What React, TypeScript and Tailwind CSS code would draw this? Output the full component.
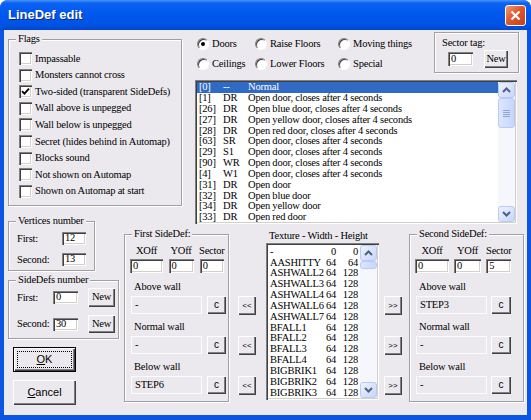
import React from "react";

const SUNKEN =
  "bg-white shadow-[inset_1px_1px_0_#808080,inset_2px_2px_0_#404040,inset_-1px_-1px_0_#ffffff,inset_-2px_-2px_0_#d4d0c8]";
const RAISED =
  "bg-[#ebe9ed] shadow-[inset_1px_1px_0_#ffffff,inset_-1px_-1px_0_#404040,inset_-2px_-2px_0_#808080]";

function Group({
  label,
  className = "",
  children,
}: {
  label?: string;
  className?: string;
  children?: React.ReactNode;
}) {
  return (
    <div
      className={`relative shrink-0 border border-[#a0a0a0] shadow-[inset_1px_1px_0_#ffffff,1px_1px_0_#ffffff] ${className}`}
    >
      {label && (
        <span className="absolute -top-[8px] left-[7px] whitespace-nowrap bg-[#ebe9ed] px-[2px] leading-[14px]">
          {label}
        </span>
      )}
      {children}
    </div>
  );
}

function Check({ checked }: { checked?: boolean }) {
  return (
    <span
      className={`flex h-[13px] w-[13px] shrink-0 items-center justify-center ${SUNKEN}`}
    >
      {checked && (
        <svg width="9" height="9" viewBox="0 0 9 9">
          <path d="M1 4.2 L3.4 6.6 L8 1.6" stroke="#000" strokeWidth="1.8" fill="none" />
        </svg>
      )}
    </span>
  );
}

function Radio({ on }: { on?: boolean }) {
  return (
    <span className="flex h-[12px] w-[12px] shrink-0 items-center justify-center rounded-full border border-t-[#808080] border-l-[#808080] border-r-white border-b-white bg-white shadow-[inset_1px_1px_0_#404040]">
      {on && <span className="h-[4px] w-[4px] rounded-full bg-black" />}
    </span>
  );
}

function Edit({ value, className = "" }: { value: string; className?: string }) {
  return (
    <div className={`flex shrink-0 items-center pl-[3px] leading-none ${SUNKEN} ${className}`}>
      {value}
    </div>
  );
}

function Btn({ children, className = "" }: { children: React.ReactNode; className?: string }) {
  return (
    <div className={`flex shrink-0 items-center justify-center leading-none ${RAISED} ${className}`}>
      {children}
    </div>
  );
}

function SbBtn({ dir }: { dir: "up" | "down" }) {
  return (
    <div className="flex h-[16px] w-[17px] shrink-0 items-center justify-center rounded-[3px] border border-[#b9caf6] bg-[linear-gradient(135deg,#eef3ff,#c5d5fb)]">
      <svg width="9" height="6" viewBox="0 0 9 6">
        <path
          d={dir === "up" ? "M1 5 L4.5 1.5 L8 5" : "M1 1 L4.5 4.5 L8 1"}
          stroke="#4d6185"
          strokeWidth="2"
          fill="none"
        />
      </svg>
    </div>
  );
}

function Scrollbar({ thumb }: { thumb: number }) {
  return (
    <div className="flex w-[17px] shrink-0 flex-col bg-[#f5f7fd]">
      <SbBtn dir="up" />
      <div
        className="flex w-[17px] shrink-0 items-center justify-center rounded-[3px] border border-[#b9caf6] bg-[linear-gradient(90deg,#dce6ff,#c6d6fc)]"
        style={{ height: thumb }}
      >
        {thumb > 14 && (
          <svg width="7" height="8" viewBox="0 0 7 8">
            <path d="M0 1.5H7M0 3.5H7M0 5.5H7M0 7.5H7" stroke="#8ea5d9" strokeWidth="1" />
          </svg>
        )}
      </div>
      <div className="flex-1" />
      <SbBtn dir="down" />
    </div>
  );
}

const flags: [string, boolean][] = [
  ["Impassable", false],
  ["Monsters cannot cross", false],
  ["Two-sided (transparent SideDefs)", true],
  ["Wall above is unpegged", false],
  ["Wall below is unpegged", false],
  ["Secret (hides behind in Automap)", false],
  ["Blocks sound", false],
  ["Not shown on Automap", false],
  ["Shown on Automap at start", false],
];

const specials: [string, string, string][] = [
  ["[0]", "--", "Normal"],
  ["[1]", "DR", "Open door, closes after 4 seconds"],
  ["[26]", "DR", "Open blue door, closes after 4 seconds"],
  ["[27]", "DR", "Open yellow door, closes after 4 seconds"],
  ["[28]", "DR", "Open red door, closes after 4 seconds"],
  ["[63]", "SR", "Open door, closes after 4 seconds"],
  ["[29]", "S1", "Open door, closes after 4 seconds"],
  ["[90]", "WR", "Open door, closes after 4 seconds"],
  ["[4]", "W1", "Open door, closes after 4 seconds"],
  ["[31]", "DR", "Open door"],
  ["[32]", "DR", "Open blue door"],
  ["[34]", "DR", "Open yellow door"],
  ["[33]", "DR", "Open red door"],
];

const textures: [string, string, string][] = [
  ["-", "0", "0"],
  ["AASHITTY", "64", "64"],
  ["ASHWALL2", "64", "128"],
  ["ASHWALL3", "64", "128"],
  ["ASHWALL4", "64", "128"],
  ["ASHWALL6", "64", "128"],
  ["ASHWALL7", "64", "128"],
  ["BFALL1", "64", "128"],
  ["BFALL2", "64", "128"],
  ["BFALL3", "64", "128"],
  ["BFALL4", "64", "128"],
  ["BIGBRIK1", "64", "128"],
  ["BIGBRIK2", "64", "128"],
  ["BIGBRIK3", "64", "128"],
];

function WallBlock({
  label,
  value,
  fieldW,
  btnW,
  gap,
}: {
  label: string;
  value: string;
  fieldW: string;
  btnW: string;
  gap: string;
}) {
  return (
    <div className="flex flex-col">
      <div className="ml-[9px] h-[12px] leading-[12px]">{label}</div>
      <div className={`ml-[6px] mt-[3px] flex ${gap}`}>
        <div className={`flex h-[18px] items-center border border-[#fcfcfc] pl-[3px] ${fieldW}`}>
          {value}
        </div>
        <Btn className={`h-[18px] font-['Liberation_Sans',sans-serif] text-[10px] ${btnW}`}>c</Btn>
      </div>
    </div>
  );
}

function SideDef({
  label,
  offs,
  inW,
  inGap,
  walls,
  fieldW,
  btnW,
  fGap,
}: {
  label: string;
  offs: [string, string, string];
  inW: [string, string, string];
  inGap: string;
  walls: [string, string, string];
  fieldW: string;
  btnW: string;
  fGap: string;
}) {
  const heads = ["XOff", "YOff", "Sector"];
  return (
    <Group label={label} className="mt-[13px] h-[168px]">
      <div className={`ml-[5px] mt-[10px] flex ${inGap}`}>
        {heads.map((h, i) => (
          <div key={h} className="flex flex-col items-center">
            <div className="h-[12px] whitespace-nowrap leading-[12px]">{h}</div>
            <Edit value={offs[i]} className={`mt-[2px] h-[14px] ${inW[i]}`} />
          </div>
        ))}
      </div>
      <div className="mt-[8px] flex flex-col gap-[7px]">
        <WallBlock label="Above wall" value={walls[0]} fieldW={fieldW} btnW={btnW} gap={fGap} />
        <WallBlock label="Normal wall" value={walls[1]} fieldW={fieldW} btnW={btnW} gap={fGap} />
        <WallBlock label="Below wall" value={walls[2]} fieldW={fieldW} btnW={btnW} gap={fGap} />
      </div>
    </Group>
  );
}

function ArrowCol({ text }: { text: string }) {
  return (
    <div className="mt-[75px] flex flex-col gap-[21px]">
      {[0, 1, 2].map((i) => (
        <Btn key={i} className="h-[19px] w-[18px] font-['Liberation_Sans',sans-serif] text-[8px] tracking-normal">
          {text}
        </Btn>
      ))}
    </div>
  );
}

export default function App() {
  return (
    <div className="h-[420px] w-[531px] bg-white font-['Liberation_Serif',serif] text-[10.5px] tracking-[-0.2px] text-black">
      <div className="flex h-full flex-col rounded-t-[8px] bg-[#0b55e3]">
        {/* Title bar */}
        <div className="flex h-[30px] shrink-0 items-center rounded-t-[8px] bg-[linear-gradient(180deg,#4a96fa_0%,#0b62f2_10%,#0058ee_45%,#0053e2_85%,#0046cd_100%)] pl-[8px] pr-[5px]">
          <span className="font-['Liberation_Sans',sans-serif] text-[13px] font-bold tracking-normal text-white [text-shadow:1px_1px_0_#0a2a8a]">
            LineDef edit
          </span>
          <div className="ml-auto flex h-[21px] w-[21px] items-center justify-center rounded-[3px] border border-white bg-[linear-gradient(135deg,#f09a7a,#e0582e_45%,#c2401c)]">
            <svg width="11" height="11" viewBox="0 0 11 11">
              <path d="M1.5 1.5 L9.5 9.5 M9.5 1.5 L1.5 9.5" stroke="#fff" strokeWidth="2.2" />
            </svg>
          </div>
        </div>

        {/* Client area */}
        <div className="mx-[4px] mb-[5px] flex flex-1 flex-col bg-[#ebe9ed]">
          {/* Top section */}
          <div className="flex h-[191px] shrink-0 items-start">
            <Group label="Flags" className="ml-[4px] mt-[9px] h-[167px] w-[174px]">
              <div className="flex flex-col gap-[3.6px] pl-[10px] pt-[12px]">
                {flags.map(([t, c]) => (
                  <div key={t} className="flex h-[13px] items-center gap-[3px] whitespace-nowrap">
                    <Check checked={c} />
                    <span>{t}</span>
                  </div>
                ))}
              </div>
            </Group>

            <div className="ml-[13px] flex w-[329px] flex-col">
              <div className="flex h-[43px] items-start">
                <div className="ml-[2px] mt-[8px] grid w-[237px] grid-cols-[58px_83px_1fr] gap-y-[8px]">
                  {[
                    ["Doors", true],
                    ["Raise Floors", false],
                    ["Moving things", false],
                    ["Ceilings", false],
                    ["Lower Floors", false],
                    ["Special", false],
                  ].map(([t, on]) => (
                    <div key={t as string} className="flex h-[12px] items-center gap-[3px] whitespace-nowrap">
                      <Radio on={on as boolean} />
                      <span>{t as string}</span>
                    </div>
                  ))}
                </div>
                <div className="mt-[2px] flex h-[41px] w-[85px] flex-col border border-[#a0a0a0] shadow-[inset_1px_1px_0_#ffffff,1px_1px_0_#ffffff]">
                  <div className="ml-[7px] mt-[3px] h-[14px] leading-[14px]">Sector tag:</div>
                  <div className="ml-[13px] flex items-center gap-[11px]">
                    <Edit value="0" className="h-[14px] w-[25px]" />
                    <Btn className="h-[18px] w-[24px]">New</Btn>
                  </div>
                </div>
              </div>

              <div className={`mt-[7px] flex h-[144px] w-[322px] p-[2px] ${SUNKEN}`}>
                <div className="flex flex-1 flex-col overflow-hidden">
                  {specials.map(([n, k, d], i) => (
                    <div
                      key={n}
                      className={`flex h-[10.85px] shrink-0 items-center whitespace-nowrap leading-none ${
                        i === 0 ? "bg-[#316ac5] text-white" : ""
                      }`}
                    >
                      <span className="w-[26px] pl-[2px]">{n}</span>
                      <span className="w-[25px]">{k}</span>
                      <span>{d}</span>
                    </div>
                  ))}
                </div>
                <Scrollbar thumb={30} />
              </div>
            </div>
          </div>

          {/* Bottom section */}
          <div className="flex items-start">
            <div className="ml-[4px] flex w-[111px] shrink-0 flex-col">
              <Group label="Vertices number" className="h-[50px] w-[87px]">
                <div className="flex flex-col gap-[8px] pl-[8px] pt-[10px]">
                  <div className="flex h-[13px] items-center">
                    <span className="w-[45px]">First:</span>
                    <Edit value="12" className="h-[13px] w-[24px]" />
                  </div>
                  <div className="flex h-[13px] items-center">
                    <span className="w-[45px]">Second:</span>
                    <Edit value="13" className="h-[13px] w-[24px]" />
                  </div>
                </div>
              </Group>
              <Group label="SideDefs number" className="mt-[9px] h-[59px] w-[111px]">
                <div className="flex flex-col gap-[8px] pl-[8px] pt-[7px]">
                  <div className="flex h-[19px] items-center">
                    <span className="w-[36px]">First:</span>
                    <Edit value="0" className="h-[13px] w-[25px]" />
                    <Btn className="ml-[10px] h-[19px] w-[27px]">New</Btn>
                  </div>
                  <div className="flex h-[18px] items-center">
                    <span className="w-[36px]">Second:</span>
                    <Edit value="30" className="h-[13px] w-[25px]" />
                    <Btn className="ml-[10px] h-[18px] w-[27px]">New</Btn>
                  </div>
                </div>
              </Group>
              <div className="ml-[5px] mt-[8px] h-[25px] w-[63px] border border-black">
                <div className={`flex h-full w-full items-center justify-center p-[3px] ${RAISED}`}>
                  <div className="flex h-full w-full items-center justify-center border border-dotted border-black font-['Liberation_Sans',sans-serif] text-[11px] tracking-normal">
                    <span>
                      <span className="underline">O</span>K
                    </span>
                  </div>
                </div>
              </div>
              <Btn className="ml-[5px] mt-[8px] h-[25px] w-[63px] font-['Liberation_Sans',sans-serif] text-[11px] tracking-normal">
                <span>
                  <span className="underline">C</span>ancel
                </span>
              </Btn>
            </div>

            <div className="ml-[5px] w-[105px] shrink-0">
              <SideDef
                label="First SideDef:"
                offs={["0", "0", "0"]}
                inW={["w-[33px]", "w-[25px]", "w-[24px]"]}
                inGap="gap-[5.5px]"
                walls={["-", "-", "STEP6"]}
                fieldW="w-[71px]"
                btnW="w-[19px]"
                fGap="gap-[5px]"
              />
            </div>

            <div className="ml-[9px]">
              <ArrowCol text="<<" />
            </div>

            <div className="ml-[10px] flex w-[113px] shrink-0 flex-col">
              <div className="mt-[9px] h-[12px] whitespace-nowrap pl-[3px] leading-[12px]">
                Texture - Width - Height
              </div>
              <div className={`mt-[1px] flex h-[157px] w-[113px] p-[2px] ${SUNKEN}`}>
                <div className="flex flex-1 flex-col overflow-hidden pt-[1.5px]">
                  {textures.map(([n, w, h]) => (
                    <div key={n} className="flex h-[10.85px] shrink-0 items-center whitespace-nowrap leading-none">
                      <span className="w-[50px] pl-[2px]">{n}</span>
                      <span className="w-[18px] text-right">{w}</span>
                      <span className="w-[22px] text-right">{h}</span>
                    </div>
                  ))}
                </div>
                <Scrollbar thumb={8} />
              </div>
            </div>

            <div className="ml-[5px]">
              <ArrowCol text=">>" />
            </div>

            <div className="ml-[7px] w-[115px] shrink-0">
              <SideDef
                label="Second SideDef:"
                offs={["0", "0", "5"]}
                inW={["w-[34px]", "w-[27px]", "w-[25px]"]}
                inGap="gap-[5px]"
                walls={["STEP3", "-", "-"]}
                fieldW="w-[71px]"
                btnW="w-[20px]"
                fGap="gap-[4px]"
              />
            </div>
          </div>
        </div>
      </div>
    </div>
  );
}
